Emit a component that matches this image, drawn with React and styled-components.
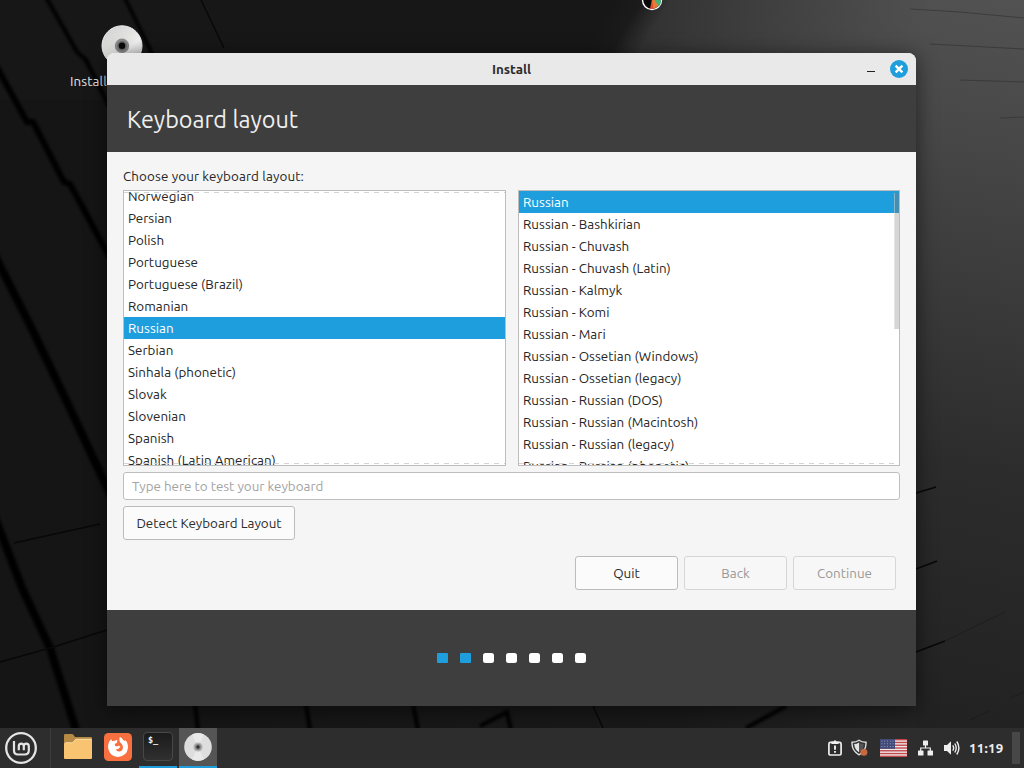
import React from "react";
import styled, { createGlobalStyle, css } from "styled-components";

const GlobalStyle = createGlobalStyle`
  * { box-sizing: border-box; }
  body { margin: 0; overflow: hidden; }
`;

const Desktop = styled.div`
  position: relative;
  display: flex;
  flex-direction: column;
  justify-content: flex-end;
  width: 1024px;
  height: 768px;
  overflow: hidden;
  background: #151515;
  color: #262626;
  font-family: Ubuntu, "Noto Sans", "Open Sans", sans-serif;
  font-size: 13.4px;
`;

const WallpaperArt = styled.svg`
  position: absolute;
  inset: 0;
`;

const DesktopIcon = styled.div`
  position: absolute;
  left: 66px;
  top: 24px;
  display: flex;
  flex-direction: column;
  align-items: center;
  gap: 6px;
  width: 112px;
  color: #e6e6e6;
  white-space: nowrap;
  line-height: 20px;
  letter-spacing: 0.1px;
`;

const Cursor = styled.svg`
  position: absolute;
  left: 641px;
  top: -11px;
`;

const Window = styled.section`
  position: absolute;
  left: 107px;
  top: 53px;
  display: flex;
  flex-direction: column;
  width: 809px;
  height: 653px;
  border-radius: 8px 8px 0 0;
  overflow: hidden;
  background: #f5f5f5;
`;

const WindowShadow = styled.div`
  position: absolute;
  left: 107px;
  top: 53px;
  width: 809px;
  height: 653px;
  border-radius: 8px 8px 0 0;
  box-shadow: 0 3px 20px 1px rgba(0, 0, 0, 0.5);
`;

const TitleBar = styled.header`
  display: grid;
  grid-template-columns: 1fr auto 1fr;
  align-items: center;
  flex: 0 0 32px;
  padding: 0 8px;
  background: #e9e9e9;
`;

const WindowTitle = styled.div`
  grid-column: 2;
  padding-top: 2px;
  font-weight: 700;
  line-height: 18px;
  color: #2d2d2d;
`;

const WindowControls = styled.div`
  display: flex;
  align-items: center;
  justify-content: flex-end;
  gap: 15px;
`;

const Minimize = styled.span`
  width: 8px;
  height: 1px;
  margin-top: 5px;
  background: #222;
`;

const PageHeader = styled.div`
  display: flex;
  align-items: center;
  flex: 0 0 67px;
  padding: 1px 20px 0;
  background: #3e3e3e;
  color: #efefef;
`;

const PageTitle = styled.h1`
  margin: 0;
  font-weight: 400;
  font-size: 23.4px;
  line-height: 32px;
`;

const Content = styled.main`
  display: flex;
  flex-direction: column;
  flex: 1;
  padding: 15px 16px 20px;
`;

const Prompt = styled.div`
  height: 23px;
  line-height: 20px;
  letter-spacing: 0.12px;
`;

const Lists = styled.div`
  display: flex;
  justify-content: space-between;
  height: 276px;
`;

const ListBox = styled.div`
  position: relative;
  width: ${(p) => p.$width}px;
  border: 1px solid #bdbdbd;
  background: #fff;
  overflow: hidden;
`;

const Rows = styled.div`
  margin-top: ${(p) => -p.$scroll}px;
`;

const Row = styled.div`
  height: 22px;
  padding-left: 4px;
  line-height: 24px;
  letter-spacing: 0.03px;
  white-space: nowrap;
  ${(p) =>
    p.$selected &&
    css`
      background: #1f9ede;
      color: #fff;
    `}
`;

const Undershoot = styled.div`
  position: absolute;
  left: 0;
  right: 0;
  ${(p) => (p.$top ? "top: 1px;" : "bottom: 1px;")}
  height: 1px;
  background: repeating-linear-gradient(90deg, #d4d4d4 0 5px, transparent 5px 10px);
`;

const Scrollbar = styled.div`
  position: absolute;
  right: 0;
  top: 2px;
  width: 5px;
  height: 136px;
  border-left: 1px solid rgba(255, 255, 255, 0.35);
  background: linear-gradient(rgba(120, 120, 120, 0.42) 20px, rgba(120, 120, 120, 0.3) 20px);
`;

const Entry = styled.div`
  height: 28px;
  margin-top: 6px;
  padding-left: 8px;
  border: 1px solid #bebebe;
  border-radius: 3px;
  background: #fff;
  color: #a3a3a3;
  line-height: 27px;
`;

const Button = styled.button`
  width: ${(p) => p.$width}px;
  height: 34px;
  padding: 1px 0 0;
  border: 1px solid ${(p) => (p.disabled ? "#d6d6d6" : "#bcbcbc")};
  border-radius: 3px;
  background: ${(p) => (p.disabled ? "#f7f7f7" : "#fbfbfb")};
  color: ${(p) => (p.disabled ? "#999" : "#2b2b2b")};
  font: inherit;
`;

const DetectRow = styled.div`
  margin-top: 6px;
  height: 34px;
`;

const Actions = styled.div`
  display: flex;
  justify-content: flex-end;
  gap: 6px;
  margin-top: 16px;
  padding-right: 4px;
`;

const PageFooter = styled.footer`
  display: flex;
  align-items: center;
  justify-content: center;
  gap: 12px;
  flex: 0 0 96px;
  background: #3e3e3e;
`;

const Step = styled.span`
  width: 11px;
  height: 10px;
  border-radius: ${(p) => (p.$done ? 1 : 2.5)}px;
  background: ${(p) => (p.$done ? "#1f9ede" : "#fff")};
`;

const Panel = styled.nav`
  position: relative;
  display: flex;
  align-items: stretch;
  height: 40px;
  background: #2d2d2d;
`;

const MenuButton = styled.div`
  display: flex;
  align-items: center;
  width: 51px;
  padding-left: 4px;
  border-right: 1px solid #3b3b3b;
`;

const Launchers = styled.div`
  display: flex;
  gap: 2px;
  margin-left: 8px;
`;

const Launcher = styled.div`
  display: flex;
  align-items: center;
  justify-content: center;
  width: 38px;
  padding-bottom: ${(p) => (p.$running ? 0 : 2)}px;
  border-bottom: ${(p) => (p.$running ? "2px solid #1f9ede" : "0")};
  background: ${(p) => (p.$active ? "#555" : "transparent")};
`;

const Tray = styled.div`
  display: flex;
  align-items: center;
  margin-left: auto;
  color: #eee;
`;

const TrayItem = styled.div`
  display: flex;
  margin-right: ${(p) => p.$gap}px;
`;

const Clock = styled.div`
  width: 36px;
  margin-right: 7px;
  padding-top: 2px;
  font-weight: 700;
  font-size: 13.33px;
  line-height: 18px;
  letter-spacing: 0.2px;
  white-space: nowrap;
`;

const ShowDesktop = styled.div`
  width: 8px;
  height: 32px;
  margin-right: 4px;
  background: #474747;
`;

const layouts = [
  "Norwegian", "Persian", "Polish", "Portuguese", "Portuguese (Brazil)",
  "Romanian", "Russian", "Serbian", "Sinhala (phonetic)", "Slovak",
  "Slovenian", "Spanish", "Spanish (Latin American)",
];

const variants = [
  "Russian", "Russian - Bashkirian", "Russian - Chuvash", "Russian - Chuvash (Latin)",
  "Russian - Kalmyk", "Russian - Komi", "Russian - Mari", "Russian - Ossetian (Windows)",
  "Russian - Ossetian (legacy)", "Russian - Russian (DOS)", "Russian - Russian (Macintosh)",
  "Russian - Russian (legacy)", "Russian - Russian (phonetic)",
];

function Wallpaper() {
  return (
    <WallpaperArt width="1024" height="768" viewBox="0 0 1024 768">
      <defs>
        <linearGradient id="right" x1="1010" y1="0" x2="860" y2="700" gradientUnits="userSpaceOnUse">
          <stop offset="0" stopColor="#525252" />
          <stop offset="0.15" stopColor="#4a4a4a" />
          <stop offset="0.35" stopColor="#3e3e3e" />
          <stop offset="0.65" stopColor="#2c2c2c" />
          <stop offset="1" stopColor="#222" />
        </linearGradient>
        <linearGradient id="edge" x1="598" y1="25" x2="836" y2="168" gradientUnits="userSpaceOnUse">
          <stop offset="0" stopColor="#171717" />
          <stop offset="0.09" stopColor="#171717" stopOpacity="0.93" />
          <stop offset="0.18" stopColor="#1c1c1c" stopOpacity="0.5" />
          <stop offset="1" stopColor="#262626" stopOpacity="0" />
        </linearGradient>
        <linearGradient id="bottom" x1="0" y1="0" x2="1" y2="0">
          <stop offset="0" stopColor="#151515" />
          <stop offset="0.7" stopColor="#191919" />
          <stop offset="1" stopColor="#232323" />
        </linearGradient>
        <filter id="soft" filterUnits="userSpaceOnUse" x="-40" y="-40" width="1100" height="860">
          <feGaussianBlur stdDeviation="1.6" />
        </filter>
      </defs>
      <rect width="1024" height="768" fill="url(#right)" />
      <rect width="1024" height="680" fill="url(#edge)" />
      <rect y="100" width="120" height="640" fill="#151515" />
      <rect x="107" y="690" width="809" height="40" fill="url(#bottom)" />
      <g fill="none" stroke="#050505" filter="url(#soft)">
        <path d="M42 -10L77 52L86 60L115 118" strokeWidth="4" />
        <path d="M121 -10L160 70" strokeWidth="3.5" />
        <path d="M-6 62L27 122L33 122L64 182L70 184L110 258" strokeWidth="6" />
        <path d="M-8 250L30 325L66 400L112 498" strokeWidth="8" />
        <path d="M-8 510L22 588L50 648L76 730" strokeWidth="8" />
        <path d="M195 704L198 730M306 704L310 730M413 704L418 730M480 726L507 712L511 730M786 706L746 728" strokeWidth="4" />
      </g>
      <g fill="none" stroke="#080808" strokeWidth="1.4">
        <path d="M201 0L224 48M14 543L100 524M0 662L50 648L107 630M593 706L603 728" />
        <path d="M916 493L936 487M916 569L937 561M916 652L945 641" />
      </g>
      <g fill="none" strokeWidth="1" opacity="0.7">
        <path d="M910 9L960 12L1024 18M930 44L1024 49M960 80L1024 82M1000 118L1024 117" stroke="#333" />
        <path d="M945 641L1005 612M970 720L990 711M1010 698L1024 692" stroke="#1a1a1a" />
      </g>
    </WallpaperArt>
  );
}

function Disc({ size }) {
  return (
    <svg width={size} height={size} viewBox="0 0 42 42">
      <defs>
        <linearGradient id="disc" x1="0.15" y1="0" x2="0.85" y2="1">
          <stop offset="0" stopColor="#d2d2d4" />
          <stop offset="0.4" stopColor="#e4e4e2" />
          <stop offset="0.6" stopColor="#f5f5f5" />
          <stop offset="1" stopColor="#c6c6c6" />
        </linearGradient>
      </defs>
      <circle cx="21" cy="21.8" r="20" fill="url(#disc)" stroke="#efefef" />
      <circle cx="21" cy="21.8" r="7.2" fill="#8e8e8e" />
      <circle cx="21" cy="21.8" r="4.8" fill="#6b6b6b" />
      <circle cx="21" cy="21.8" r="3.2" fill="#0a0a0a" />
    </svg>
  );
}

function TaskDisc() {
  return (
    <svg width="28" height="28" viewBox="0 0 28 28">
      <circle cx="14" cy="14" r="13.8" fill="#dedede" />
      <path d="M14 14L8 1.5A14 14 0 0 1 20 1.5ZM14 14L8 26.5A14 14 0 0 0 20 26.5Z" fill="#e9e9e9" />
      <circle cx="14" cy="14" r="4.6" fill="#b2b2b2" />
      <circle cx="14" cy="14" r="3" fill="#858585" />
      <circle cx="14" cy="14" r="1.7" fill="#333" />
    </svg>
  );
}

function MintLogo() {
  return (
    <svg width="34" height="34" viewBox="0 0 34 34" fill="none" stroke="#e4e4e4">
      <circle cx="17" cy="17" r="14.8" strokeWidth="2.3" />
      <path
        d="M10 10V19.5Q10 23.5 14 23.5H20.5Q24.8 23.5 24.8 19.5V15.3Q24.8 12.7 22.3 12.7Q19.8 12.7 19.8 15.3V19.2M19.8 15.3Q19.8 12.7 17.3 12.7Q14.8 12.7 14.8 15.3V19.2"
        strokeWidth="2.2"
      />
    </svg>
  );
}

function Folder() {
  return (
    <svg width="30" height="28" viewBox="0 0 30 28">
      <path d="M1 2.2Q1 1 2.2 1H9Q10 1 10.6 2L12 4H28Q29 4 29 5V13H1Z" fill="#b58a45" />
      <path d="M1 25V11Q1 10 2 9.8H9.5L12.8 6H28Q29 6 29 7V25Q29 26 28 26H2Q1 26 1 25Z" fill="#f8c471" />
      <path d="M2.5 9.8H9.5L12.8 6.3H28.5" stroke="#fbdca6" strokeWidth="1" fill="none" />
    </svg>
  );
}

function Firefox() {
  return (
    <svg width="28" height="28" viewBox="0 0 28 28">
      <rect width="28" height="28" rx="4.5" fill="#f8703f" />
      <path
        d="M4.2 15.5C3.6 11.2 5.1 8 7.2 6.2L8.4 8.3Q10 7.5 11 7.8L13.3 6.7L13.1 9.5L11 11Q10.2 12.3 11.4 13Q13 13.6 14.2 12.7Q16 12.7 16.5 13.9Q15.7 14.2 15.2 15Q14.2 16.7 11.8 16.2Q12.7 18.7 15.5 18.4Q19.3 17.7 18.9 13.7Q18.5 11.4 16.8 10Q14.7 8.2 15.8 4Q18 4.6 19.2 7Q20.7 8 21.2 8.2L21.4 7Q24.4 10.4 23.9 15.3Q22.8 23.2 14.2 24Q6 23.7 4.2 15.5Z"
        fill="#fff"
      />
    </svg>
  );
}

const TerminalIcon = styled.div`
  width: 30px;
  height: 29px;
  margin-top: -1px;
  padding: 1px 0 0 4px;
  border: 1px solid #484848;
  border-radius: 4px;
  background: linear-gradient(#1b1b1b, #303030);
  color: #f2f2f2;
  font: 700 8.5px/12px "DejaVu Sans Mono", monospace;
`;

function CloseIcon() {
  return (
    <svg width="18" height="18" viewBox="0 0 18 18">
      <circle cx="9" cy="9" r="9" fill="#1f9ede" />
      <path d="M5.6 5.6L12.4 12.4M12.4 5.6L5.6 12.4" stroke="#fff" strokeWidth="2.4" />
    </svg>
  );
}

function ReportIcon() {
  return (
    <svg width="14" height="16" viewBox="0 0 14 16">
      <rect x="0.9" y="2.4" width="12.2" height="12.6" rx="1.5" fill="none" stroke="#eee" strokeWidth="1.7" />
      <path d="M3.5 1.5H5.6Q7 -0.8 8.4 1.5H10.5V4H3.5Z" fill="#eee" />
      <path d="M7 5.5V9.7M7 10.9V12.7" stroke="#eee" strokeWidth="1.9" />
    </svg>
  );
}

function ShieldIcon() {
  return (
    <svg width="18" height="18" viewBox="0 0 18 18">
      <path d="M8 1.2Q11 3.3 15 3.2Q15.5 11.5 8 15.8Q0.5 11.5 1 3.2Q5 3.3 8 1.2Z" fill="#353535" stroke="#ddd" strokeWidth="1.4" />
      <path d="M8 3.5Q10 5 12.8 5Q12.5 10.5 8 13.2Z" fill="#555" />
      <path d="M8 3.5Q6 5 3.2 5Q3.5 10.5 8 13.2Z" fill="#e4e4e4" />
      <circle cx="12.9" cy="13.2" r="3.5" fill="#c9683f" />
    </svg>
  );
}

function Flag() {
  return (
    <svg width="27" height="18" viewBox="0 0 27 18">
      <rect width="27" height="18" fill="#f1e9e7" />
      {[0, 1, 2, 3, 4, 5, 6].map((n) => (
        <rect key={n} y={n * 2.77} width="27" height="1.4" fill="#c1484d" />
      ))}
      <rect width="15" height="9.8" fill="#414a78" />
      {[2, 4.8, 7.6].map((y) =>
        [2, 4.8, 7.6, 10.4, 13].map((x) => (
          <circle key={`${x}-${y}`} cx={x} cy={y} r="0.55" fill="#a5abc3" />
        ))
      )}
    </svg>
  );
}

function NetworkIcon() {
  return (
    <svg width="15" height="16" viewBox="0 0 15 16" fill="#eee">
      <rect x="5" y="0.5" width="5" height="5" rx="0.6" />
      <rect x="0" y="10.5" width="5.5" height="5" rx="0.6" />
      <rect x="9.5" y="10.5" width="5.5" height="5" rx="0.6" />
      <path d="M7.5 5V8M2.7 11V8H12.3V11" fill="none" stroke="#eee" strokeWidth="1.2" />
    </svg>
  );
}

function VolumeIcon() {
  return (
    <svg width="16" height="16" viewBox="0 0 16 16">
      <path d="M0 5H3L7 1.3V14.7L3 11H0Z" fill="#eee" />
      <path d="M8.7 5.3Q10.6 8 8.7 10.7M10.8 3.5Q13.6 8 10.8 12.5M12.8 1.5Q17 8 12.8 14.5" fill="none" stroke="#eee" strokeWidth="1.4" />
    </svg>
  );
}

export default function App() {
  return (
    <Desktop>
      <GlobalStyle />
      <Wallpaper />
      <DesktopIcon>
        <Disc size={42} />
        <span>Install Linux Mint</span>
      </DesktopIcon>
      <Cursor width="22" height="22" viewBox="0 0 22 22">
        <circle cx="11" cy="11" r="9.5" fill="#080808" stroke="#fff" strokeWidth="1.4" />
        <path d="M11 9V19.8Q17 19.4 19.4 13L18 9Z" fill="#e67b34" />
        <path d="M12 9L18 17.5Q20.5 14.5 20 9Z" fill="#48af76" />
        <path d="M11 10L9 19.7L12.4 20Z" fill="#df4d2e" />
      </Cursor>
      <WindowShadow />
      <Window>
        <TitleBar>
          <WindowTitle>Install</WindowTitle>
          <WindowControls>
            <Minimize />
            <CloseIcon />
          </WindowControls>
        </TitleBar>
        <PageHeader>
          <PageTitle>Keyboard layout</PageTitle>
        </PageHeader>
        <Content>
          <Prompt>Choose your keyboard layout:</Prompt>
          <Lists>
            <ListBox $width={383}>
              <Rows $scroll={6}>
                {layouts.map((name) => (
                  <Row key={name} $selected={name === "Russian"}>{name}</Row>
                ))}
              </Rows>
              <Undershoot $top />
              <Undershoot />
            </ListBox>
            <ListBox $width={382}>
              <Rows $scroll={0}>
                {variants.map((name) => (
                  <Row key={name} $selected={name === "Russian"}>{name}</Row>
                ))}
              </Rows>
              <Undershoot />
              <Scrollbar />
            </ListBox>
          </Lists>
          <Entry>Type here to test your keyboard</Entry>
          <DetectRow>
            <Button $width={172}>Detect Keyboard Layout</Button>
          </DetectRow>
          <Actions>
            <Button $width={103}>Quit</Button>
            <Button $width={103} disabled>Back</Button>
            <Button $width={103} disabled>Continue</Button>
          </Actions>
        </Content>
        <PageFooter>
          {[1, 2, 3, 4, 5, 6, 7].map((n) => (
            <Step key={n} $done={n <= 2} />
          ))}
        </PageFooter>
      </Window>
      <Panel>
        <MenuButton>
          <MintLogo />
        </MenuButton>
        <Launchers>
          <Launcher><Folder /></Launcher>
          <Launcher><Firefox /></Launcher>
          <Launcher $running><TerminalIcon>$_</TerminalIcon></Launcher>
          <Launcher $running $active><TaskDisc /></Launcher>
        </Launchers>
        <Tray>
          <TrayItem $gap={9}><ReportIcon /></TrayItem>
          <TrayItem $gap={11}><ShieldIcon /></TrayItem>
          <TrayItem $gap={11}><Flag /></TrayItem>
          <TrayItem $gap={11}><NetworkIcon /></TrayItem>
          <TrayItem $gap={9}><VolumeIcon /></TrayItem>
          <Clock>11:19</Clock>
          <ShowDesktop />
        </Tray>
      </Panel>
    </Desktop>
  );
}
